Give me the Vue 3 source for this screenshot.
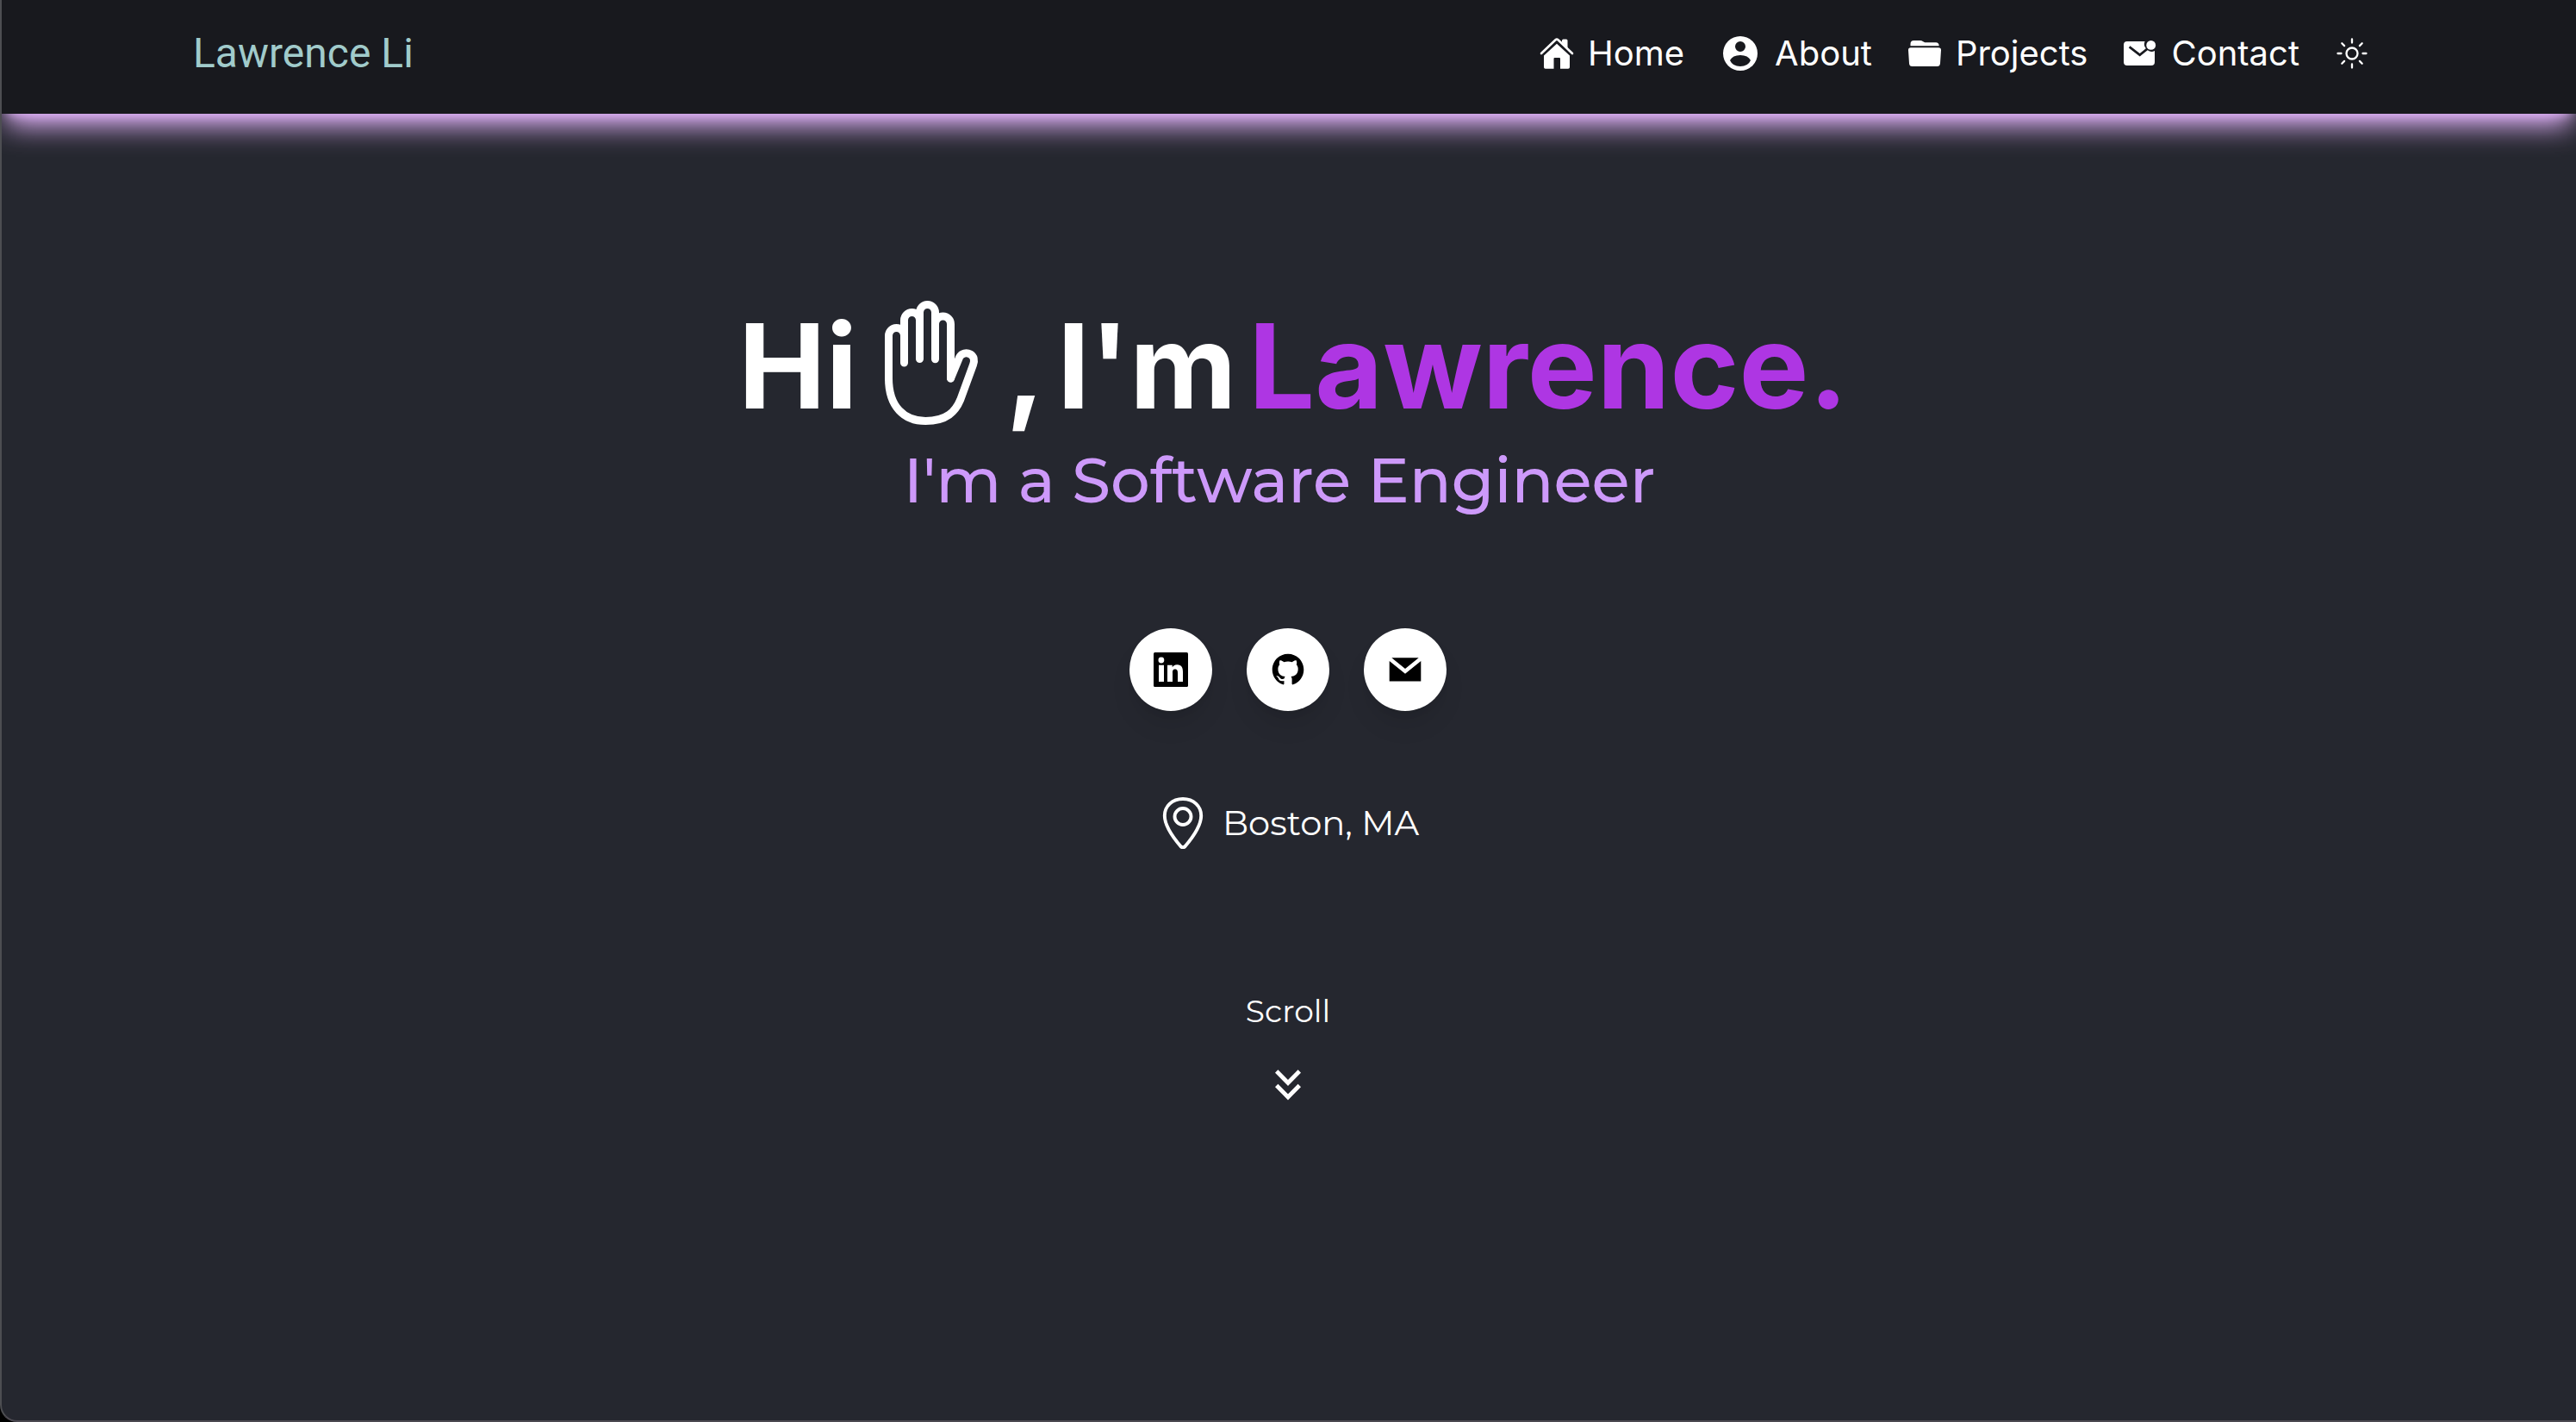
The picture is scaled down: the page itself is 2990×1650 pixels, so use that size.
<script setup>
const firstName = 'Lawrence'
const navLinks = [
  { id: 'home', label: 'Home' },
  { id: 'about', label: 'About' },
  { id: 'projects', label: 'Projects' },
  { id: 'contact', label: 'Contact' },
]
</script>

<template>
  <div class="page">
    <header class="bar">
      <a class="brand" href="#home">{{ firstName }} Li</a>
      <nav class="nav">
        <a v-for="link in navLinks" :key="link.id" class="nav-link" :href="'#' + link.id">
          <svg v-if="link.id === 'home'" class="icon" viewBox="0 0 40 40" aria-hidden="true">
            <path d="M2 20 18.500 4.300Q20 3 21.500 4.300L38 20" fill="none" stroke="currentColor" stroke-width="2.600" stroke-linecap="round" />
            <path d="M26 7V5q0-1.500 1.500-1.500h3.500q1.500 0 1.500 1.500v10.200z" fill="currentColor" />
            <path d="M20 8.700 35 22.500V36q0 1.800-1.800 1.800H24V26q0-1-1-1h-5.500q-1 0-1 1v11.800H6.800Q5 37.800 5 36V22.500z" fill="currentColor" />
          </svg>
          <svg v-else-if="link.id === 'about'" class="icon icon-person" viewBox="0 0 48 48" aria-hidden="true">
            <path fill="currentColor" fill-rule="evenodd" d="M24 4a20 20 0 1 1 0 40 20 20 0 0 1 0-40zM24 10a6 6 0 1 0 0 12 6 6 0 0 0 0-12zM12 32q3 7 12 7t12-7q-3-6-12-6T12 32z" />
          </svg>
          <svg v-else-if="link.id === 'projects'" class="icon" viewBox="0 0 40 40" aria-hidden="true">
            <path d="M3.500 11.200V9q0-4 4-4h7.500q1.600 0 2.800.9l1.400.8q.8.500 2 .5H33q3.500 0 3.700 4z" fill="currentColor" />
            <path d="M4 13.300h32q3.200 0 3 3l-1 15.200q-.3 3.500-3.500 3.500h-29Q2.200 35 2 31.500L1 16.300q-.2-3 3-3z" fill="currentColor" />
          </svg>
          <svg v-else class="icon" viewBox="0 0 40 40" aria-hidden="true">
            <path d="M5 6h20.600a7.700 7.700 0 0 0 1.200 8.300L19.700 20 8.400 11.300 6.800 13.400 19.700 23.400l9-7.200a7.700 7.700 0 0 0 8.300.9V30q0 4-4 4H5q-4 0-4-4V10q0-4 4-4z" fill="currentColor" />
            <circle cx="32.700" cy="10.400" r="5.400" fill="currentColor" />
          </svg>
          <span>{{ link.label }}</span>
        </a>
        <button class="theme" type="button" aria-label="Toggle theme">
          <svg class="icon" viewBox="0 0 40 40" fill="none" stroke="currentColor" stroke-width="2.300" stroke-linecap="round" aria-hidden="true">
            <circle cx="20" cy="20" r="6.500" />
            <path d="M20 3.500v4M20 32.500v4M3.500 20h4M32.500 20h4M8.300 8.300l2.800 2.800M28.900 28.900l2.800 2.800M8.300 31.700l2.800-2.800M28.900 11.100l2.800-2.800" />
          </svg>
        </button>
      </nav>
    </header>

    <main class="hero">
      <h1 class="title">
        <span>Hi</span>
        <svg class="hand" viewBox="0 0 512 512" fill="none" stroke="currentColor" stroke-width="32" stroke-linecap="round" stroke-linejoin="round" aria-hidden="true">
          <path d="M80 320V144a32 32 0 0 1 32-32 32 32 0 0 1 32 32v112M144 256V80a32 32 0 0 1 32-32 32 32 0 0 1 32 32v160M272 241V96a32 32 0 0 1 32-32 32 32 0 0 1 32 32v224M208 240V48a32 32 0 0 1 32-32 32 32 0 0 1 32 32v192" />
          <path d="M80 320c0 117.400 64 176 152 176s123.710-39.600 144-88l52.670-144c6.660-18.050 3.640-34.790-11.870-43.600-15.520-8.820-35.910-4.280-44.310 11.680L336 320" />
        </svg>
        <span>,</span>
        <span>I'm</span>
        <span class="name">{{ firstName }}.</span>
      </h1>
      <p class="role">I'm a Software Engineer</p>

      <div class="social">
        <a class="round" href="#linkedin" aria-label="LinkedIn">
          <svg class="icon" viewBox="0 0 40 40" aria-hidden="true">
            <rect width="40" height="40" rx="1.500" fill="#000" />
            <circle cx="8.900" cy="9" r="3.400" fill="#fff" />
            <path d="M6 14.700h6V34H6zM16 14.700h5.700v2.600c.8-1.500 2.800-3.100 5.600-3.100 5.500 0 6.700 3.600 6.700 8.600V34h-6v-9.500c0-2.300 0-5-3.100-5S22 21.900 22 24.400V34h-6z" fill="#fff" />
          </svg>
        </a>
        <a class="round" href="#github" aria-label="GitHub">
          <svg class="icon" viewBox="-.75 -.75 17.500 17.500" aria-hidden="true">
            <path fill="#000" d="M8 0C3.580 0 0 3.580 0 8c0 3.540 2.290 6.530 5.470 7.590.4.070.55-.17.55-.38 0-.19-.01-.82-.01-1.490-2.010.37-2.530-.49-2.690-.94-.09-.23-.48-.94-.82-1.130-.28-.15-.68-.52-.01-.53.63-.01 1.080.58 1.230.82.72 1.210 1.870.87 2.330.66.07-.52.28-.87.51-1.070-1.780-.2-3.640-.89-3.640-3.950 0-.87.31-1.590.82-2.150-.08-.2-.36-1.020.08-2.120 0 0 .67-.21 2.200.82.64-.18 1.320-.27 2-.27s1.360.09 2 .27c1.530-1.040 2.200-.82 2.200-.82.44 1.100.16 1.920.08 2.120.51.56.82 1.270.82 2.150 0 3.070-1.870 3.750-3.650 3.950.29.25.54.73.54 1.480 0 1.070-.01 1.930-.01 2.200 0 .21.15.46.55.38A8.010 8.010 0 0 0 16 8c0-4.420-3.580-8-8-8z" />
          </svg>
        </a>
        <a class="round" href="#email" aria-label="Email">
          <svg class="icon" viewBox="0 0 40 40" aria-hidden="true">
            <path fill="#000" d="M4.300 6.300h31.400L20 19zM1.700 10 20 24.700 38.300 10v23.500H1.700z" />
          </svg>
        </a>
      </div>

      <p class="place">
        <svg class="pin" viewBox="0 0 48 60" fill="none" stroke="currentColor" stroke-width="3.900" stroke-linejoin="round" aria-hidden="true">
          <path d="M24 2C11.500 2 2.800 10.500 2.800 21.500c0 12.500 10.500 26 18.600 35.500q2.600 2.600 5.200 0C34.700 47.500 45.200 34 45.200 21.500 45.200 10.500 36.500 2 24 2z" />
          <circle cx="24" cy="22.500" r="9.500" />
        </svg>
        <span>Boston, MA</span>
      </p>

      <a class="scroll" href="#about">
        <span>Scroll</span>
        <svg class="chevrons" viewBox="0 0 30 36" fill="none" stroke="currentColor" stroke-width="4.800" aria-hidden="true">
          <path d="M1.700 2 15 15.500 28.300 2M1.700 18.500 15 32l13.300-13.500" />
        </svg>
      </a>
    </main>
  </div>
</template>

<style>
body {
  background: #000;
}
</style>

<style scoped>
.page {
  box-sizing: border-box;
  min-height: 100vh;
  overflow: hidden;
  border-left: 2px solid #4d4e52;
  border-bottom: 2px solid #4d4a52;
  border-bottom-left-radius: 20px;
  background: #25272f;
  color: #fff;
  font-family: Inter, "Liberation Sans", sans-serif;
}
a {
  color: inherit;
  text-decoration: none;
}
.bar {
  display: flex;
  align-items: center;
  justify-content: space-between;
  box-sizing: border-box;
  height: 132px;
  padding: 0 240px 8px 222px;
  background: #18191e;
  box-shadow: 0 20px 30px -6px #e2b3fa, 0 8px 12px -8px #e2b3fa;
}
.brand {
  color: #a1cbcb;
  font: 400 48px/56px Roboto, sans-serif;
}
.nav {
  display: flex;
  align-items: center;
  gap: 41px;
}
.nav-link {
  display: flex;
  align-items: center;
  gap: 16px;
  font-size: 40px;
  line-height: 48px;
}
.icon {
  display: block;
  width: 40px;
  height: 40px;
}
.icon-person {
  width: 48px;
  height: 48px;
}
.theme {
  padding: 0;
  border: 0;
  background: none;
  color: inherit;
}
.hero {
  display: flex;
  flex-direction: column;
  align-items: center;
  padding: 205px 2px 0 0;
}
.title {
  display: flex;
  align-items: center;
  gap: 14px;
  margin: 0;
  padding-left: 12px;
  font-size: 136px;
  font-weight: 700;
  line-height: 160px;
}
.title span {
  padding-top: 8px;
}
.hand {
  width: 144px;
  height: 144px;
}
.name {
  color: #ae36e3;
}
.role {
  margin: 6px 0 0;
  padding-right: 20px;
  color: #cd99fa;
  font-family: Montserrat, Inter, sans-serif;
  font-size: 72px;
  font-weight: 500;
  line-height: 92px;
}
.social {
  display: flex;
  gap: 40px;
  margin-top: 126px;
}
.round {
  display: grid;
  place-items: center;
  width: 96px;
  height: 96px;
  border-radius: 50%;
  background: #fff;
  box-shadow: 0 20px 30px -6px rgba(0, 0, 0, 0.1), 0 8px 12px -8px rgba(0, 0, 0, 0.1);
}
.place {
  display: flex;
  align-items: center;
  gap: 22px;
  margin: 100px 0 0;
  padding-left: 6px;
  font-family: Montserrat, Inter, sans-serif;
  font-size: 40px;
  line-height: 60px;
}
.pin {
  width: 48px;
  height: 60px;
}
.scroll {
  display: flex;
  flex-direction: column;
  align-items: center;
  gap: 44px;
  margin-top: 164px;
  font-family: Montserrat, Inter, sans-serif;
  font-size: 36px;
  line-height: 48px;
}
.chevrons {
  width: 30px;
  height: 36px;
}
</style>
